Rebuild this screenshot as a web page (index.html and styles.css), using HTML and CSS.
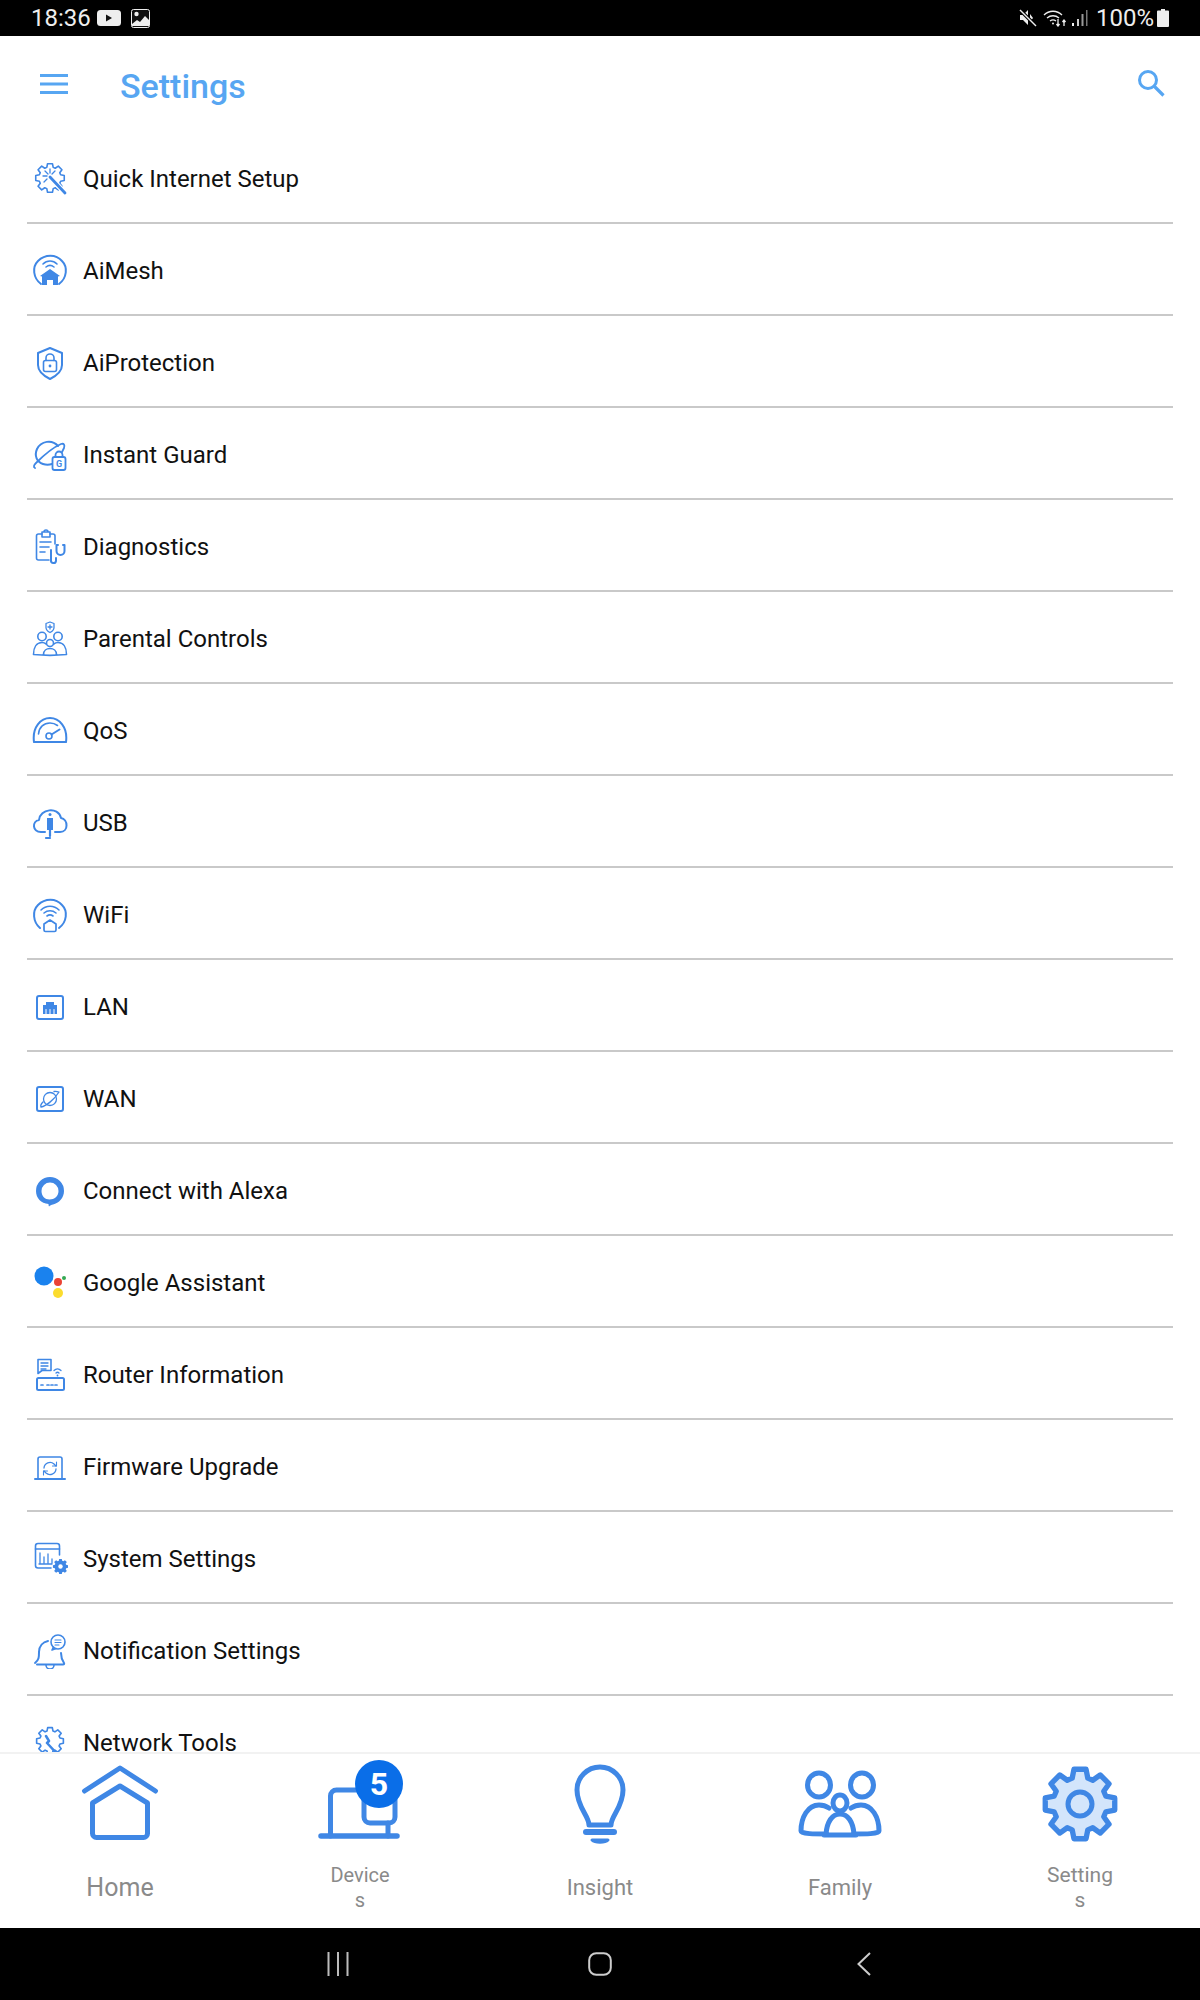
FILE: index.html
```html
<!DOCTYPE html>
<html lang="en">
<head>
    <meta charset="UTF-8">
    <meta name="viewport" content="width=device-width, initial-scale=1.0">
    <title>Settings</title>
    <link rel="stylesheet" href="styles.css">
</head>
<body>
    <svg class="defs" width="0" height="0">
        <symbol id="gear" viewBox="-110 -110 220 220" overflow="visible">
            <path d="M-22-73L-17-98L17-98L22-73L36-67L57-82L82-57L67-36L73-22L98-17L98 17L73 22L67 36L82 57L57 82L36 67L22 73L17 98L-17 98L-22 73L-36 67L-57 82L-82 57L-67 36L-73 22L-98 17L-98-17L-73-22L-67-36L-82-57L-57-82L-36-67Z"/>
        </symbol>
    </svg>

    <!-- Status bar -->
    <div class="status">
        <span class="time">18:36</span>
        <svg class="st-yt" width="24" height="16" viewBox="0 0 24 16"><rect width="24" height="16" rx="3.5" fill="#eee"/><path d="M9 4.5v7l6-3.5z" fill="#111"/></svg>
        <svg class="st-img" width="19" height="19" viewBox="0 0 19 19"><rect x=".5" y=".5" width="18" height="18" rx="2" fill="#111" stroke="#eee"/><circle cx="5.500" cy="5" r="2.200" fill="#eee"/><path d="M1 15l5-4 3 2 5-6 4 4v6H1z" fill="#eee"/></svg>
        <div class="status-right">
            <svg width="18" height="18" viewBox="0 0 18 18"><path d="M1 6h3l5-5v15l-5-5H1z M11 5l3 4-3 4" fill="#eee"/><path d="M1 1l16 16" stroke="#000" stroke-width="3.500"/><path d="M1 1l16 16" stroke="#eee" stroke-width="1.500"/></svg>
            <svg class="st-wifi" width="24" height="18" viewBox="0 0 24 18" fill="none" stroke="#eee" stroke-width="1.300"><path d="M1 6c5-5 13-5 18 0M4 9c3.500-3 8.500-3 12 0M7 12c2-1.500 4-1.500 6 0"/><circle cx="10" cy="14.500" r="1" fill="#eee" stroke="none"/><path d="M15 10v7M13.500 15l1.500 2 1.500-2M21 17v-6M19.500 13l1.500-2 1.500 2"/></svg>
            <svg class="st-sig" width="16" height="18" viewBox="0 0 16 18"><rect x="0" y="14" width="2" height="3" fill="#eee"/><rect x="5" y="10" width="2" height="7" fill="#ccc"/><rect x="9.500" y="5" width="2" height="12" fill="#999"/><rect x="14" y="1" width="1.500" height="16" fill="#777"/></svg>
            <span class="pct">100%</span>
            <svg class="st-bat" width="12" height="18" viewBox="0 0 12 18"><path d="M4 0h4v1.500h3a1 1 0 0 1 1 1V17a1 1 0 0 1-1 1H1a1 1 0 0 1-1-1V2.500a1 1 0 0 1 1-1h3z" fill="#eee"/></svg>
        </div>
    </div>

    <!-- Header -->
    <div class="header">
        <svg class="menu" width="28" height="20" viewBox="0 0 28 20"><path d="M0 1.500h28M0 10h28M0 18.500h28" stroke="#57a6f2" stroke-width="3"/></svg>
        <span class="title">Settings</span>
        <svg class="search" width="28" height="28" viewBox="0 0 28 28" fill="none" stroke="#57a6f2"><circle cx="11" cy="11" r="8.500" stroke-width="3"/><path d="M17 17l9.500 9.500" stroke-width="3.200"/></svg>
    </div>

    <!-- Settings list -->
    <div class="list">
        <div class="row">
            <svg class="ico" viewBox="0 0 36 36">
                <use href="#gear" x="2" y="1" width="32" height="32" stroke-width="11"/>
                <path d="M19 17l14 15" stroke="#fff" stroke-width="5" fill="none"/>
                <path d="M18 16l15 16" stroke-width="2.800" fill="none"/>
                <path d="M18 8v4M11 15h4M13 10l3 3M23 10l-3 3M12 21l3-3" stroke-width="1.300"/>
            </svg>
            <span>Quick Internet Setup</span>
        </div>
        <div class="row">
            <svg class="ico" viewBox="0 0 36 36">
                <path d="M9 31C1 25 0 14 6 8c7-7 18-7 24 0 6 6 5 17-3 23" stroke-width="2"/>
                <path d="M11 11c4-4 10-4 14 0M14 14c2.500-2 5.500-2 8 0"/>
                <path class="solid" d="M18 16l10 7-2 .5V32h-5v-5h-6v5h-5v-8.500L8 23z"/>
            </svg>
            <span>AiMesh</span>
        </div>
        <div class="row">
            <svg class="ico" viewBox="0 0 36 36">
                <path d="M18 3l12 5v12c0 7-6 11-12 14-6-3-12-7-12-14V8z" stroke-width="2"/>
                <rect x="11.500" y="15.500" width="13" height="11" rx="2"/>
                <path d="M14 15.500v-2.500a4 4 0 0 1 8 0v2.500"/>
                <circle class="solid" cx="18" cy="21" r="1.400"/>
            </svg>
            <span>AiProtection</span>
        </div>
        <div class="row">
            <svg class="ico" viewBox="0 0 36 36">
                <path d="M26 9C20 2 9 4 5 12c-3 7 0 13 6 15 3 1 6 1 9 0" stroke-width="2"/>
                <path d="M3 31c-2-1-1-3 1-5C12 18 22 10 29 7c3-1 4 1 3 4l-2 4" stroke-width="1.800"/>
                <rect x="20.500" y="20" width="13" height="13" rx="2" fill="#fff" stroke-width="1.800"/>
                <path d="M23.500 20v-2a3.500 3.500 0 0 1 7 0v2" stroke-width="1.800"/>
                <text class="tiny" x="27" y="30">G</text>
            </svg>
            <span>Instant Guard</span>
        </div>
        <div class="row">
            <svg class="ico" viewBox="0 0 36 36">
                <path d="M10 5H6.500a2 2 0 0 0-2 2v22a2 2 0 0 0 2 2H17M23 15V7a2 2 0 0 0-2-2h-3"/>
                <path d="M10 3h8v5h-8z M12 3a2 2 0 0 1 4 0"/>
                <path d="M8 13h11M8 18h9M8 23h5"/>
                <path d="M19 21v10a2.500 2.500 0 0 0 5 1v-3" stroke-width="2"/>
                <path d="M26 16h-1.500v6a4 4 0 0 0 8 0v-6H31" stroke-width="2"/>
            </svg>
            <span>Diagnostics</span>
        </div>
        <div class="row">
            <svg class="ico" viewBox="0 0 36 36">
                <path d="M18 1l4 1.500v4c0 2.500-2 4-4 5-2-1-4-2.500-4-5v-4z M18 4v4M16 6h4" stroke-width="1.300"/>
                <circle cx="10" cy="15.500" r="4.200"/>
                <circle cx="26" cy="15.500" r="4.200"/>
                <circle cx="18" cy="22" r="3.500"/>
                <path d="M1.500 33.500c0-7 3-12 8.500-12 2 0 3 .500 4 1.500M34.500 33.500c0-7-3-12-8.500-12-2 0-3 .500-4 1.500M11.500 33.500c0-4 3-6 6.500-6s6.500 2 6.500 6M1.500 33.500c10 1 23 1 33 0"/>
            </svg>
            <span>Parental Controls</span>
        </div>
        <div class="row">
            <svg class="ico" viewBox="0 0 36 36">
                <path d="M2 29C0 14 9 5 18 5s18 9 16 24z" stroke-width="2"/>
                <path d="M6.500 21C7 14 12 10 18 10c3 0 5.500 1 7.500 2.500"/>
                <circle cx="17" cy="23" r="3"/>
                <path d="M19.500 21.500l8-5" stroke-width="2"/>
            </svg>
            <span>QoS</span>
        </div>
        <div class="row">
            <svg class="ico" viewBox="0 0 36 36">
                <path d="M13 27H9c-9 0-9-11-2-12 1-11 19-14 22-2 7 1 8 14-1 14h-5" stroke-width="2"/>
                <rect class="solid" x="15" y="13" width="6" height="12"/>
                <circle class="solid" cx="18" cy="9.500" r="1.500"/>
                <path d="M18 25v6M14 33h4" stroke-width="2.200"/>
            </svg>
            <span>USB</span>
        </div>
        <div class="row">
            <svg class="ico" viewBox="0 0 36 36">
                <path d="M8 31C1 25 0 14 6 8c7-7 18-7 24 0 6 6 5 17-3 23" stroke-width="2"/>
                <path d="M9 13c5-5 13-5 18 0M12 16c3.500-3 8.500-3 12 0M15 19c2-1.500 4-1.500 6 0"/>
                <path d="M12 27l6-4 6 4v6a1.500 1.500 0 0 1-1.500 1.500h-9A1.500 1.500 0 0 1 12 33z" fill="#fff" stroke-width="1.700"/>
            </svg>
            <span>WiFi</span>
        </div>
        <div class="row">
            <svg class="ico" viewBox="0 0 36 36">
                <rect x="5" y="7" width="26" height="23" rx="2" stroke-width="2"/>
                <path class="solid" d="M14 13h8v3h3v9H11v-9h3z"/>
                <path d="M14 20.500v4.500M18 20.500v4.500M22 20.500v4.500" stroke="#fff" stroke-width="1"/>
            </svg>
            <span>LAN</span>
        </div>
        <div class="row">
            <svg class="ico" viewBox="0 0 36 36">
                <rect x="5" y="6" width="26" height="24" rx="2" stroke-width="2"/>
                <circle cx="18" cy="18" r="6.500" stroke-width="1.300"/>
                <path d="M9 26c5-1 13-7 18-15-3-1-3-1-5-.500M9 26c-1-2 0-3 2-5" stroke-width="1.300"/>
            </svg>
            <span>WAN</span>
        </div>
        <div class="row">
            <svg class="ico" viewBox="0 0 36 36">
                <path class="solid" fill-rule="evenodd" d="M18 4a14 14 0 0 1 14 14c0 7-5 12-11 13.500-1.500.3-3 .8-4 2-.5-1-.5-1.800-.5-2.500C9 30.500 4 25 4 18A14 14 0 0 1 18 4zm0 5.500a8.500 8.500 0 0 0-8.500 8.500c0 5 3.500 8.500 8 8.500 5 0 9-3.500 9-8.500A8.500 8.500 0 0 0 18 9.500z"/>
            </svg>
            <span>Connect with Alexa</span>
        </div>
        <div class="row">
            <svg class="ico" viewBox="0 0 36 36">
                <circle cx="12" cy="11" r="9.500" fill="#1a82ee" stroke="none"/>
                <circle cx="26" cy="17" r="4" fill="#ea4335" stroke="none"/>
                <circle cx="26" cy="28" r="5" fill="#fbdc2e" stroke="none"/>
                <circle cx="32" cy="13" r="2" fill="#34a853" stroke="none"/>
            </svg>
            <span>Google Assistant</span>
        </div>
        <div class="row">
            <svg class="ico" viewBox="0 0 36 36">
                <path d="M6 2.500h13v11H10l-4 3z"/>
                <path d="M9 6h7M9 9h7M9 12h5" stroke-width="1.300"/>
                <rect x="5" y="21" width="27" height="12" rx="1.500" stroke-width="2"/>
                <path d="M9 28h2M15 28h2M19 28h2M23 28h2" stroke-width="1.700"/>
                <path d="M22 13.500c2-2 5-2 7 0M24 16c1-1 2-1 3 0" stroke-width="1.300"/>
                <circle class="solid" cx="25.500" cy="18.500" r=".9"/>
            </svg>
            <span>Router Information</span>
        </div>
        <div class="row">
            <svg class="ico" viewBox="0 0 36 36">
                <path d="M6 29V10a2 2 0 0 1 2-2h20a2 2 0 0 1 2 2v19"/>
                <path d="M3 30h30" stroke-width="2"/>
                <path d="M12 19a6 6 0 0 1 10-4l2 2M24 20a6 6 0 0 1-10 4l-2-2" stroke-width="1.300"/>
                <path d="M24.500 13v4h-4M11.500 26v-4h4" stroke-width="1.100"/>
            </svg>
            <span>Firmware Upgrade</span>
        </div>
        <div class="row">
            <svg class="ico" viewBox="0 0 36 36">
                <path d="M19 27H6a2.500 2.500 0 0 1-2.500-2.500V5A2.500 2.500 0 0 1 6 2.500h19A2.500 2.500 0 0 1 27.500 5v9"/>
                <path d="M3.500 8h24"/>
                <path d="M8 12v10M12 16v6M16 13v9M20 18v4M7 23h13" stroke-width="1.300"/>
                <use class="solid" href="#gear" x="20" y="17" width="17" height="17"/>
                <circle cx="28.500" cy="25.500" r="2.200" fill="#fff" stroke="none"/>
            </svg>
            <span>System Settings</span>
        </div>
        <div class="row">
            <svg class="ico" viewBox="0 0 36 36">
                <path d="M3 30c4-3 4-6 4-11 0-6 4-10 9-11M29 20c0 4 1 7 3 10 .5 1 0 1.500-1 1.500H5" stroke-width="2"/>
                <path d="M14 32a4 4 0 0 0 8 0"/>
                <circle cx="26" cy="9" r="7" fill="#fff"/>
                <path d="M23 7h6M23 9.500h6M23 12h4" stroke-width="1.100"/>
                <path d="M21.500 14l-1.500 3 4-1.500"/>
            </svg>
            <span>Notification Settings</span>
        </div>
        <div class="row">
            <svg class="ico" viewBox="0 0 36 36">
                <use href="#gear" x="3" y="1" width="30" height="30" stroke-width="12"/>
                <path d="M14 11l3 5-2 2 14 15" stroke-width="2.500"/>
            </svg>
            <span>Network Tools</span>
        </div>
    </div>

    <!-- Bottom tabs -->
    <div class="tabs">
        <div class="tab">
            <svg class="tab-ico" viewBox="0 0 96 96">
                <path d="M12.500 37L48 14l35.500 23"/>
                <path d="M20.500 49v30.500a4 4 0 0 0 4 4h47a4 4 0 0 0 4-4V49L48 32z"/>
            </svg>
            <div class="label wide">Home</div>
        </div>
        <div class="tab">
            <svg class="tab-ico" viewBox="0 0 96 96">
                <path d="M18.500 82V42a6 6 0 0 1 6-6h38"/>
                <rect x="52" y="30" width="31" height="39" rx="6"/>
                <path d="M76 69v13"/>
                <path d="M9 82h76" stroke-width="5.500"/>
            </svg>
            <span class="badge">5</span>
            <div class="label">Device<br>s</div>
        </div>
        <div class="tab">
            <svg class="tab-ico" viewBox="0 0 96 96">
                <path d="M37 71c0-9-12-18-12-35a23 23 0 0 1 46 0c0 17-12 26-12 35z"/>
                <path d="M34 78h28" stroke-width="6"/>
                <path d="M40 86c3 3 13 3 16 0z" fill="#3f87e5" stroke-width="3"/>
            </svg>
            <div class="label mid">Insight</div>
        </div>
        <div class="tab">
            <svg class="tab-ico" viewBox="0 0 96 96">
                <ellipse cx="27" cy="31" rx="11.500" ry="12"/>
                <ellipse cx="70" cy="31" rx="11.500" ry="12"/>
                <ellipse cx="48" cy="49" rx="7" ry="8"/>
                <path d="M35 80c-12 0-26 0-26-3 0-14 7-26 18-26 4 0 7 1 10 3M61 80c12 0 26 0 26-3 0-14-7-26-18-26-4 0-7 1-10 3M34 80c1-12 6-20 14-20s13 8 14 20M32 81h32"/>
            </svg>
            <div class="label mid">Family</div>
        </div>
        <div class="tab">
            <svg class="tab-ico" viewBox="0 0 96 96">
                <use class="gear-big" href="#gear" x="9" y="11" width="78" height="78" stroke-width="15"/>
                <circle class="hole" cx="48" cy="50" r="12"/>
            </svg>
            <div class="label lg">Setting<br>s</div>
        </div>
    </div>

    <!-- Android nav -->
    <div class="nav">
        <svg class="nav-bars" width="22" height="24" viewBox="0 0 22 24"><path d="M1.500 0v24M11 0v24M20.500 0v24" stroke="#bbb" stroke-width="2"/></svg>
        <svg width="24" height="24" viewBox="0 0 24 24" fill="none"><rect x="1.200" y="1.200" width="21.600" height="21.600" rx="7" stroke="#ccc" stroke-width="2"/></svg>
        <svg width="14" height="24" viewBox="0 0 14 24" fill="none"><path d="M13 1L1.500 12 13 23" stroke="#ccc" stroke-width="2"/></svg>
    </div>
</body>
</html>
```
FILE: styles.css
```css
* { box-sizing: border-box; }

body { margin: 0; height: 2000px; overflow: hidden; display: flex; flex-direction: column; background: #fff; font-family: Roboto, "Liberation Sans", sans-serif; }

.defs { position: absolute; }

/* Status bar */
.status { height: 36px; flex: none; background: #000; color: #eee; display: flex; align-items: center; padding-left: 31px; font-size: 24px; }
.status svg { flex: none; }
.time { width: 66px; }
.st-img { margin-left: 10px; }
.status-right { margin-left: auto; padding-right: 31px; display: flex; align-items: center; }
.st-wifi { margin-left: 6px; }
.st-sig { margin-left: 5px; }
.pct { margin-left: 8px; }
.st-bat { margin-left: 3px; }

/* Header */
.header { height: 96px; flex: none; display: flex; align-items: center; padding: 3px 35px 0 40px; }
.menu { margin-right: 52px; margin-top: -3px; }
.title { color: #57a6f2; font-size: 34px; font-weight: 500; }
.search { margin-left: auto; margin-top: -5px; }

/* Settings list */
.list { flex: 1; overflow: hidden; padding: 0 27px; }
.row { height: 92px; border-bottom: 2px solid #c9c9c9; display: flex; align-items: center; gap: 15px; padding: 4px 0 0 5px; font-size: 24px; color: #111; }

.ico { width: 36px; height: 36px; flex: none; fill: none; stroke: #3f87e5; stroke-width: 1.600; stroke-linejoin: round; stroke-linecap: round; }
.ico .solid { fill: #3f87e5; stroke: none; }
.tiny { font-size: 9px; font-weight: 700; text-anchor: middle; fill: #3f87e5; stroke: none; }

/* Bottom tabs */
.tabs { height: 176px; flex: none; display: grid; grid-template-columns: repeat(5, 240px); border-top: 2px solid #f2f2f2; background: #fff; }
.tab { position: relative; display: flex; flex-direction: column; align-items: center; }
.tab-ico { width: 96px; height: 96px; flex: none; fill: none; stroke: #3f87e5; stroke-width: 5; stroke-linejoin: round; stroke-linecap: round; }
.gear-big { fill: #d3e5fb; }
.hole { fill: #d3e5fb; stroke-width: 5; }
.label { flex: 1; display: flex; flex-direction: column; justify-content: center; padding-bottom: 2px; text-align: center; color: #8a8a8a; font-size: 20px; line-height: 25px; }
.label.wide { font-size: 25px; padding-bottom: 4px; }
.label.mid { font-size: 22px; padding-bottom: 4px; }
.label.lg { font-size: 21px; }
.badge { position: absolute; left: 115px; top: 6px; width: 48px; height: 48px; border-radius: 50%; background: #0a6ee8; color: #fff; font-size: 32px; font-weight: 700; display: flex; align-items: center; justify-content: center; }

/* Android nav */
.nav { height: 72px; flex: none; background: #000; display: grid; grid-template-columns: repeat(3, 264px); justify-items: center; align-items: center; padding: 0 204px; }
.nav-bars { margin-left: 3px; }
```
